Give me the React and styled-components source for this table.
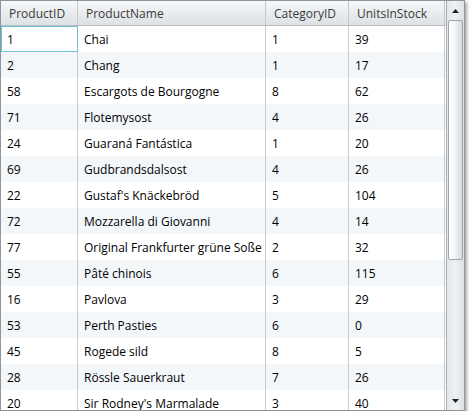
import React from "react";
import styled, { createGlobalStyle } from "styled-components";

const Global = createGlobalStyle`
  html, body { margin: 0; padding: 0; background: #fff; }
  body { font-family: "Open Sans", "Noto Sans", sans-serif; }
`;

const rows = [
  [1, "Chai", 1, 39],
  [2, "Chang", 1, 17],
  [58, "Escargots de Bourgogne", 8, 62],
  [71, "Flotemysost", 4, 26],
  [24, "Guaraná Fantástica", 1, 20],
  [69, "Gudbrandsdalsost", 4, 26],
  [22, "Gustaf's Knäckebröd", 5, 104],
  [72, "Mozzarella di Giovanni", 4, 14],
  [77, "Original Frankfurter grüne Soße", 2, 32],
  [55, "Pâté chinois", 6, 115],
  [16, "Pavlova", 3, 29],
  [53, "Perth Pasties", 6, 0],
  [45, "Rogede sild", 8, 5],
  [28, "Rössle Sauerkraut", 7, 26],
  [20, "Sir Rodney's Marmalade", 3, 40],
];

const cols = "77px 188px 83px 96px";

const Frame = styled.div`
  width: 463px;
  height: 409px;
  border: 1px solid #8e959c;
  box-shadow: 2px 2px 3px rgba(0, 0, 0, 0.35);
  display: flex;
  overflow: hidden;
  background: #fff;
`;

const Main = styled.div`
  flex: 1;
  display: flex;
  flex-direction: column;
  overflow: hidden;
`;

const Header = styled.div`
  display: grid;
  grid-template-columns: ${cols};
  height: 24px;
  flex: none;
  background: linear-gradient(#f7f8f9, #e9ecee 50%, #dde1e5);
  border-bottom: 1px solid #b7bcc1;
`;

const HeadCell = styled.div`
  display: flex;
  align-items: center;
  padding-left: 8px;
  font-size: 12px;
  color: #3a3a3a;
  border-right: 1px solid #c3c8cc;
  white-space: nowrap;
`;

const Row = styled.div`
  display: grid;
  grid-template-columns: ${cols};
  height: 26px;
  flex: none;
  background: ${(p) => (p.$alt ? "#f3f7fa" : "#ffffff")};
`;

const Cell = styled.div`
  display: flex;
  align-items: center;
  padding-left: 6px;
  font-size: 12px;
  color: #000;
  white-space: nowrap;
  overflow: hidden;
  box-sizing: border-box;
  border-right: 1px solid #c8ccd0;
  ${(p) =>
    p.$selected &&
    `border: 1px solid #6cc4d2; padding-left: 5px;`}
`;

const ScrollBar = styled.div`
  width: 18px;
  flex: none;
  border-left: 1px solid #a9afb5;
  background: linear-gradient(90deg, #e4e7ea, #eef0f2 50%, #dde1e4);
  display: flex;
  flex-direction: column;
  align-items: center;
  padding: 1px 0;
  box-sizing: border-box;
`;

const Arrow = styled.div`
  width: 16px;
  height: 17px;
  flex: none;
  display: flex;
  align-items: center;
  justify-content: center;
`;

const Thumb = styled.div`
  width: 15px;
  height: 240px;
  margin-top: 1px;
  box-sizing: border-box;
  border: 1px solid #9ea4aa;
  border-radius: 2px;
  background: linear-gradient(90deg, #ffffff, #f3f4f5 45%, #d6dade);
`;

const Track = styled.div`
  flex: 1;
`;

const Tri = ({ up }) => (
  <svg width="7" height="4" viewBox="0 0 7 4">
    <path d={up ? "M3.5 0 L7 4 L0 4 Z" : "M0 0 L7 0 L3.5 4 Z"} fill="#222" />
  </svg>
);

export default function App() {
  return (
    <>
      <Global />
      <Frame>
        <Main>
          <Header>
            <HeadCell>ProductID</HeadCell>
            <HeadCell>ProductName</HeadCell>
            <HeadCell>CategoryID</HeadCell>
            <HeadCell>UnitsInStock</HeadCell>
          </Header>
          {rows.map((r, i) => (
            <Row key={i} $alt={i % 2 === 1}>
              <Cell $selected={i === 0}>{r[0]}</Cell>
              <Cell>{r[1]}</Cell>
              <Cell>{r[2]}</Cell>
              <Cell>{r[3]}</Cell>
            </Row>
          ))}
        </Main>
        <ScrollBar>
          <Arrow>
            <Tri up />
          </Arrow>
          <Thumb />
          <Track />
          <Arrow>
            <Tri />
          </Arrow>
        </ScrollBar>
      </Frame>
    </>
  );
}
